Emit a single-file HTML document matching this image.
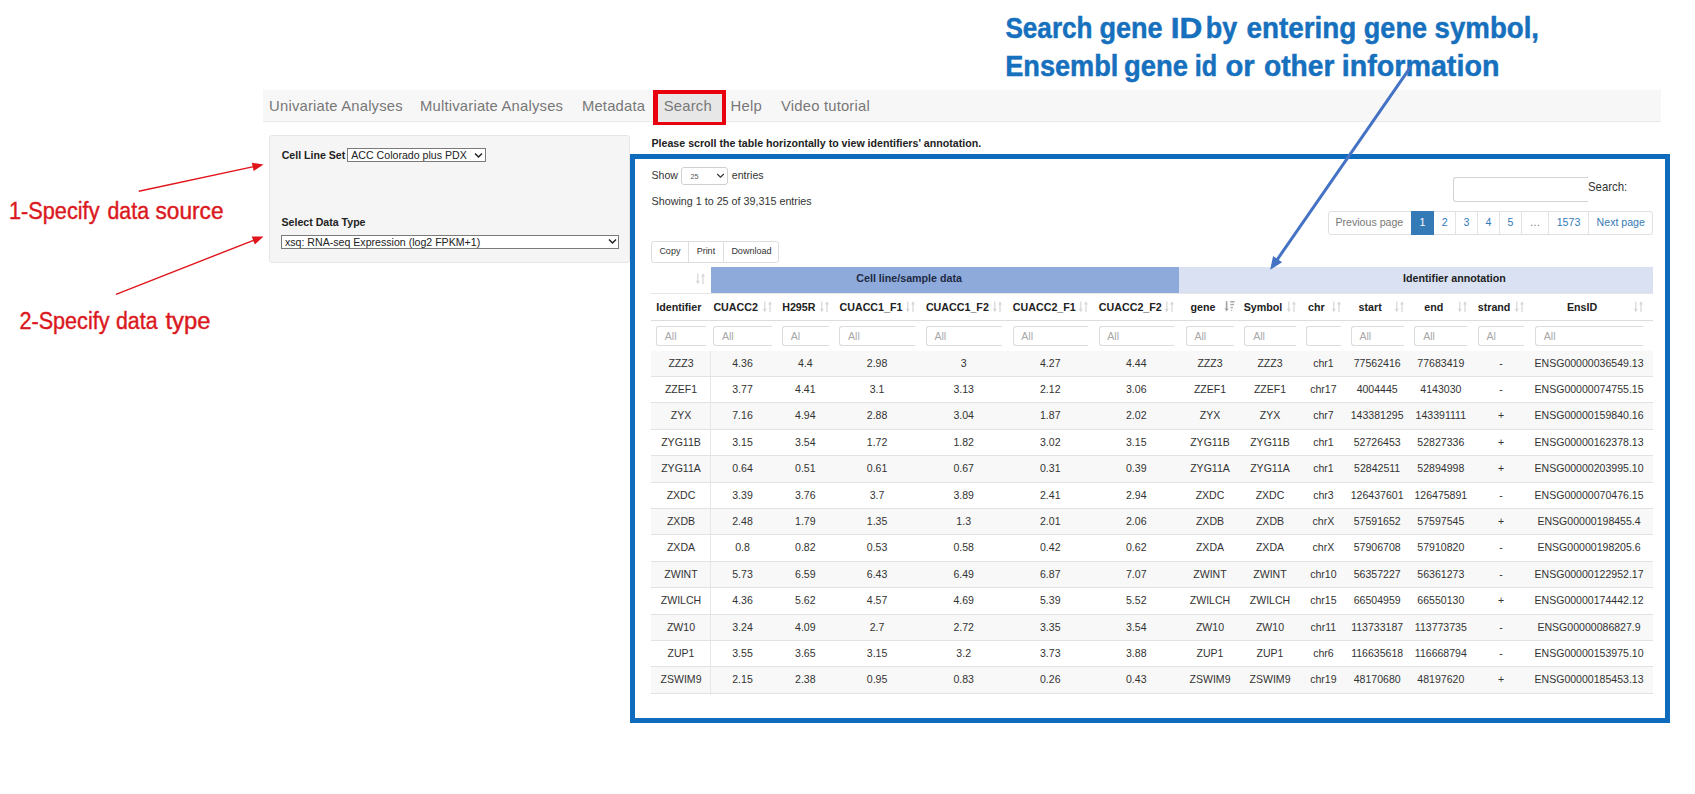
<!DOCTYPE html>
<html><head><meta charset="utf-8"><title>Search</title>
<style>
html,body{margin:0;padding:0;background:#fff;}
body{width:1695px;height:794px;position:relative;overflow:hidden;font-family:"Liberation Sans", sans-serif;}
.t{position:absolute;white-space:pre;font-family:"Liberation Sans", sans-serif;}
.b{position:absolute;}
</style></head><body>
<div class="b" style="left:263.00px;top:90.00px;width:1398.00px;height:32.00px;background:#f7f7f7;border-bottom:1.3px solid #e9e9e9;box-sizing:border-box;"></div>
<div class="b" style="left:653.00px;top:90.00px;width:73.00px;height:35.00px;background:#e7e7e7;"></div>
<div class="t" style="left:269.10px;top:98.77px;font-size:14.8px;line-height:14.8px;font-weight:400;color:#777;letter-spacing:0.2px;">Univariate Analyses</div>
<div class="t" style="left:420.00px;top:98.77px;font-size:14.8px;line-height:14.8px;font-weight:400;color:#777;letter-spacing:0.2px;">Multivariate Analyses</div>
<div class="t" style="left:581.90px;top:98.77px;font-size:14.8px;line-height:14.8px;font-weight:400;color:#777;letter-spacing:0.2px;">Metadata</div>
<div class="t" style="left:663.75px;top:98.77px;font-size:14.8px;line-height:14.8px;font-weight:400;color:#777;letter-spacing:0.2px;">Search</div>
<div class="t" style="left:730.60px;top:98.77px;font-size:14.8px;line-height:14.8px;font-weight:400;color:#777;letter-spacing:0.2px;">Help</div>
<div class="t" style="left:781.00px;top:98.77px;font-size:14.8px;line-height:14.8px;font-weight:400;color:#777;letter-spacing:0.2px;">Video tutorial</div>
<div class="b" style="left:653.00px;top:90.00px;width:73.00px;height:35.00px;border-style:solid;border-color:#e8000f;border-width:4.8px 4.6px 3.8px 5px;box-sizing:border-box;"></div>
<div class="b" style="left:269.00px;top:135.00px;width:361.00px;height:127.50px;background:#f5f5f5;border:1px solid #e6e6e6;box-sizing:border-box;border-radius:3px;"></div>
<div class="t" style="left:281.70px;top:150.13px;font-size:10.6px;line-height:10.6px;font-weight:700;color:#222;">Cell Line Set</div>
<div class="b" style="left:347.30px;top:148.00px;width:138.70px;height:14.00px;background:#fff;border:1px solid #7a7a7a;box-sizing:border-box;"></div>
<div class="t" style="left:351.30px;top:149.73px;font-size:10.6px;line-height:10.6px;font-weight:400;color:#222;">ACC Colorado plus PDX</div>
<svg class="b" style="left:474px;top:152px" width="9" height="7" viewBox="0 0 9 7"><path d="M1 1.5 L4.5 5 L8 1.5" fill="none" stroke="#222" stroke-width="1.5"/></svg>
<div class="t" style="left:281.50px;top:217.33px;font-size:10.6px;line-height:10.6px;font-weight:700;color:#222;">Select Data Type</div>
<div class="b" style="left:281.25px;top:235.30px;width:337.95px;height:13.50px;background:#fff;border:1px solid #7a7a7a;box-sizing:border-box;"></div>
<div class="t" style="left:285.00px;top:236.63px;font-size:10.6px;line-height:10.6px;font-weight:400;color:#222;">xsq: RNA-seq Expression (log2 FPKM+1)</div>
<svg class="b" style="left:608px;top:237.8px" width="9" height="7" viewBox="0 0 9 7"><path d="M1 1.5 L4.5 5 L8 1.5" fill="none" stroke="#222" stroke-width="1.5"/></svg>
<div class="t" style="left:651.50px;top:137.99px;font-size:10.64px;line-height:10.64px;font-weight:700;color:#222;">Please scroll the table horizontally to view identifiers' annotation.</div>
<div class="b" style="left:630.00px;top:154.00px;width:1040.00px;height:568.50px;border:5px solid #0f6cbd;box-sizing:border-box;"></div>
<div class="t" style="left:651.50px;top:170.13px;font-size:10.6px;line-height:10.6px;font-weight:400;color:#333;">Show</div>
<div class="b" style="left:681.30px;top:166.50px;width:46.70px;height:18.30px;border:1px solid #d0d0d0;border-radius:3px;box-sizing:border-box;background:#fff;"></div>
<div class="t" style="left:690.50px;top:172.91px;font-size:7.2px;line-height:7.2px;font-weight:400;color:#555;">25</div>
<svg class="b" style="left:716px;top:172px" width="9" height="7" viewBox="0 0 9 7"><path d="M1.2 2 L4.5 5.2 L7.8 2" fill="none" stroke="#333" stroke-width="1.1"/></svg>
<div class="t" style="left:731.80px;top:170.13px;font-size:10.6px;line-height:10.6px;font-weight:400;color:#333;">entries</div>
<div class="t" style="left:651.50px;top:196.10px;font-size:10.75px;line-height:10.75px;font-weight:400;color:#333;">Showing 1 to 25 of 39,315 entries</div>
<div class="b" style="left:1452.70px;top:176.50px;width:147.30px;height:25.30px;border:1.5px solid #d3d3d3;border-right:none;border-radius:3px 0 0 3px;box-sizing:border-box;background:#fff;"></div>
<div class="b" style="left:1587.50px;top:170.00px;width:52.50px;height:35.00px;background:#fff;"></div>
<div class="t" style="left:1588.20px;top:180.70px;font-size:12.4px;line-height:12.4px;font-weight:400;color:#333;transform:scaleX(0.92);transform-origin:0 0;">Search:</div>
<div class="b" style="left:1327.60px;top:211.40px;width:325.40px;height:23.80px;border:1px solid #e0e0e0;border-radius:3px;box-sizing:border-box;"></div>
<div class="b" style="left:1411.10px;top:211.40px;width:22.70px;height:23.80px;background:#337ab7;"></div>
<div class="t" style="left:1069.35px;width:600px;text-align:center;top:216.93px;font-size:10.6px;line-height:10.6px;font-weight:400;color:#777;">Previous page</div>
<div class="t" style="left:1122.45px;width:600px;text-align:center;top:216.93px;font-size:10.6px;line-height:10.6px;font-weight:400;color:#fff;">1</div>
<div class="t" style="left:1144.60px;width:600px;text-align:center;top:216.93px;font-size:10.6px;line-height:10.6px;font-weight:400;color:#337ab7;">2</div>
<div class="b" style="left:1454.90px;top:211.40px;width:1.00px;height:23.80px;background:#e3e3e3;"></div>
<div class="t" style="left:1166.45px;width:600px;text-align:center;top:216.93px;font-size:10.6px;line-height:10.6px;font-weight:400;color:#337ab7;">3</div>
<div class="b" style="left:1477.00px;top:211.40px;width:1.00px;height:23.80px;background:#e3e3e3;"></div>
<div class="t" style="left:1188.40px;width:600px;text-align:center;top:216.93px;font-size:10.6px;line-height:10.6px;font-weight:400;color:#337ab7;">4</div>
<div class="b" style="left:1498.80px;top:211.40px;width:1.00px;height:23.80px;background:#e3e3e3;"></div>
<div class="t" style="left:1210.40px;width:600px;text-align:center;top:216.93px;font-size:10.6px;line-height:10.6px;font-weight:400;color:#337ab7;">5</div>
<div class="b" style="left:1521.00px;top:211.40px;width:1.00px;height:23.80px;background:#e3e3e3;"></div>
<div class="t" style="left:1235.00px;width:600px;text-align:center;top:216.93px;font-size:10.6px;line-height:10.6px;font-weight:400;color:#777;">…</div>
<div class="b" style="left:1548.00px;top:211.40px;width:1.00px;height:23.80px;background:#e3e3e3;"></div>
<div class="t" style="left:1268.50px;width:600px;text-align:center;top:216.93px;font-size:10.6px;line-height:10.6px;font-weight:400;color:#337ab7;">1573</div>
<div class="b" style="left:1588.00px;top:211.40px;width:1.00px;height:23.80px;background:#e3e3e3;"></div>
<div class="t" style="left:1320.75px;width:600px;text-align:center;top:216.93px;font-size:10.6px;line-height:10.6px;font-weight:400;color:#337ab7;">Next page</div>
<div class="b" style="left:651.30px;top:241.30px;width:128.20px;height:21.40px;border:1px solid #dedede;border-radius:3px;box-sizing:border-box;background:#fff;"></div>
<div class="b" style="left:688.00px;top:241.30px;width:1.00px;height:21.40px;background:#dedede;"></div>
<div class="b" style="left:722.80px;top:241.30px;width:1.00px;height:21.40px;background:#dedede;"></div>
<div class="t" style="left:369.90px;width:600px;text-align:center;top:247.38px;font-size:9.0px;line-height:9.0px;font-weight:400;color:#333;">Copy</div>
<div class="t" style="left:405.90px;width:600px;text-align:center;top:247.38px;font-size:9.0px;line-height:9.0px;font-weight:400;color:#333;">Print</div>
<div class="t" style="left:451.40px;width:600px;text-align:center;top:247.38px;font-size:9.0px;line-height:9.0px;font-weight:400;color:#333;">Download</div>
<div class="b" style="left:710.90px;top:266.90px;width:468.50px;height:25.70px;background:#8eaadb;"></div>
<div class="b" style="left:1179.40px;top:266.90px;width:473.60px;height:25.70px;background:#d9e1f2;"></div>
<div class="b" style="left:651.00px;top:292.60px;width:1002.00px;height:1.40px;background:#e6e6e6;"></div>
<div class="t" style="left:856.25px;top:273.44px;font-size:10.7px;line-height:10.7px;font-weight:700;color:#1e2a44;">Cell line/sample data</div>
<div class="t" style="left:1403.10px;top:273.44px;font-size:10.7px;line-height:10.7px;font-weight:700;color:#222;">Identifier annotation</div>
<svg class="b" style="left:695.20px;top:273.30px" width="11" height="12" viewBox="0 0 11 12"><path d="M2.8 0.6 V9" stroke="#d6d6d6" stroke-width="1.2"/><path d="M0.8 7.8 L2.8 11.2 L4.8 7.8 Z" fill="#d6d6d6"/><path d="M8.0 2.6 V11.2" stroke="#d6d6d6" stroke-width="1.2"/><path d="M6.0 3.6 L8.0 0.3 L10.0 3.6 Z" fill="#d6d6d6"/></svg>
<div class="t" style="left:656.30px;top:301.54px;font-size:10.7px;line-height:10.7px;font-weight:700;color:#222;">Identifier</div>
<div class="t" style="left:713.40px;top:301.54px;font-size:10.7px;line-height:10.7px;font-weight:700;color:#222;">CUACC2</div>
<svg class="b" style="left:761.90px;top:301.20px" width="11" height="12" viewBox="0 0 11 12"><path d="M2.8 0.6 V9" stroke="#d6d6d6" stroke-width="1.2"/><path d="M0.8 7.8 L2.8 11.2 L4.8 7.8 Z" fill="#d6d6d6"/><path d="M8.0 2.6 V11.2" stroke="#d6d6d6" stroke-width="1.2"/><path d="M6.0 3.6 L8.0 0.3 L10.0 3.6 Z" fill="#d6d6d6"/></svg>
<div class="t" style="left:782.20px;top:301.54px;font-size:10.7px;line-height:10.7px;font-weight:700;color:#222;">H295R</div>
<svg class="b" style="left:818.75px;top:301.20px" width="11" height="12" viewBox="0 0 11 12"><path d="M2.8 0.6 V9" stroke="#d6d6d6" stroke-width="1.2"/><path d="M0.8 7.8 L2.8 11.2 L4.8 7.8 Z" fill="#d6d6d6"/><path d="M8.0 2.6 V11.2" stroke="#d6d6d6" stroke-width="1.2"/><path d="M6.0 3.6 L8.0 0.3 L10.0 3.6 Z" fill="#d6d6d6"/></svg>
<div class="t" style="left:839.50px;top:301.54px;font-size:10.7px;line-height:10.7px;font-weight:700;color:#222;">CUACC1_F1</div>
<svg class="b" style="left:905.00px;top:301.20px" width="11" height="12" viewBox="0 0 11 12"><path d="M2.8 0.6 V9" stroke="#d6d6d6" stroke-width="1.2"/><path d="M0.8 7.8 L2.8 11.2 L4.8 7.8 Z" fill="#d6d6d6"/><path d="M8.0 2.6 V11.2" stroke="#d6d6d6" stroke-width="1.2"/><path d="M6.0 3.6 L8.0 0.3 L10.0 3.6 Z" fill="#d6d6d6"/></svg>
<div class="t" style="left:925.90px;top:301.54px;font-size:10.7px;line-height:10.7px;font-weight:700;color:#222;">CUACC1_F2</div>
<svg class="b" style="left:991.80px;top:301.20px" width="11" height="12" viewBox="0 0 11 12"><path d="M2.8 0.6 V9" stroke="#d6d6d6" stroke-width="1.2"/><path d="M0.8 7.8 L2.8 11.2 L4.8 7.8 Z" fill="#d6d6d6"/><path d="M8.0 2.6 V11.2" stroke="#d6d6d6" stroke-width="1.2"/><path d="M6.0 3.6 L8.0 0.3 L10.0 3.6 Z" fill="#d6d6d6"/></svg>
<div class="t" style="left:1012.80px;top:301.54px;font-size:10.7px;line-height:10.7px;font-weight:700;color:#222;">CUACC2_F1</div>
<svg class="b" style="left:1078.00px;top:301.20px" width="11" height="12" viewBox="0 0 11 12"><path d="M2.8 0.6 V9" stroke="#d6d6d6" stroke-width="1.2"/><path d="M0.8 7.8 L2.8 11.2 L4.8 7.8 Z" fill="#d6d6d6"/><path d="M8.0 2.6 V11.2" stroke="#d6d6d6" stroke-width="1.2"/><path d="M6.0 3.6 L8.0 0.3 L10.0 3.6 Z" fill="#d6d6d6"/></svg>
<div class="t" style="left:1098.80px;top:301.54px;font-size:10.7px;line-height:10.7px;font-weight:700;color:#222;">CUACC2_F2</div>
<svg class="b" style="left:1164.00px;top:301.20px" width="11" height="12" viewBox="0 0 11 12"><path d="M2.8 0.6 V9" stroke="#d6d6d6" stroke-width="1.2"/><path d="M0.8 7.8 L2.8 11.2 L4.8 7.8 Z" fill="#d6d6d6"/><path d="M8.0 2.6 V11.2" stroke="#d6d6d6" stroke-width="1.2"/><path d="M6.0 3.6 L8.0 0.3 L10.0 3.6 Z" fill="#d6d6d6"/></svg>
<div class="t" style="left:903.00px;width:600px;text-align:center;top:301.54px;font-size:10.7px;line-height:10.7px;font-weight:700;color:#222;">gene</div>
<svg class="b" style="left:1223.90px;top:301.20px" width="12" height="12" viewBox="0 0 12 12"><path d="M2.6 0.3 V8.5" stroke="#a0a0a0" stroke-width="1.6"/><path d="M0.5 7.4 L2.6 10.6 L4.7 7.4 Z" fill="#a0a0a0"/><rect x="6.3" y="0" width="4.1" height="1.6" fill="#a8a8a8"/><rect x="6.3" y="2.9" width="3.7" height="1.4" fill="#a8a8a8"/><rect x="6.6" y="5.9" width="2.3" height="1.4" fill="#a8a8a8"/><rect x="7.0" y="8.8" width="1.2" height="1.0" fill="#a8a8a8"/></svg>
<div class="t" style="left:963.00px;width:600px;text-align:center;top:301.54px;font-size:10.7px;line-height:10.7px;font-weight:700;color:#222;">Symbol</div>
<svg class="b" style="left:1285.60px;top:301.20px" width="11" height="12" viewBox="0 0 11 12"><path d="M2.8 0.6 V9" stroke="#d6d6d6" stroke-width="1.2"/><path d="M0.8 7.8 L2.8 11.2 L4.8 7.8 Z" fill="#d6d6d6"/><path d="M8.0 2.6 V11.2" stroke="#d6d6d6" stroke-width="1.2"/><path d="M6.0 3.6 L8.0 0.3 L10.0 3.6 Z" fill="#d6d6d6"/></svg>
<div class="t" style="left:1016.42px;width:600px;text-align:center;top:301.54px;font-size:10.7px;line-height:10.7px;font-weight:700;color:#222;">chr</div>
<svg class="b" style="left:1330.60px;top:301.20px" width="11" height="12" viewBox="0 0 11 12"><path d="M2.8 0.6 V9" stroke="#d6d6d6" stroke-width="1.2"/><path d="M0.8 7.8 L2.8 11.2 L4.8 7.8 Z" fill="#d6d6d6"/><path d="M8.0 2.6 V11.2" stroke="#d6d6d6" stroke-width="1.2"/><path d="M6.0 3.6 L8.0 0.3 L10.0 3.6 Z" fill="#d6d6d6"/></svg>
<div class="t" style="left:1070.17px;width:600px;text-align:center;top:301.54px;font-size:10.7px;line-height:10.7px;font-weight:700;color:#222;">start</div>
<svg class="b" style="left:1393.75px;top:301.20px" width="11" height="12" viewBox="0 0 11 12"><path d="M2.8 0.6 V9" stroke="#d6d6d6" stroke-width="1.2"/><path d="M0.8 7.8 L2.8 11.2 L4.8 7.8 Z" fill="#d6d6d6"/><path d="M8.0 2.6 V11.2" stroke="#d6d6d6" stroke-width="1.2"/><path d="M6.0 3.6 L8.0 0.3 L10.0 3.6 Z" fill="#d6d6d6"/></svg>
<div class="t" style="left:1133.83px;width:600px;text-align:center;top:301.54px;font-size:10.7px;line-height:10.7px;font-weight:700;color:#222;">end</div>
<svg class="b" style="left:1457.25px;top:301.20px" width="11" height="12" viewBox="0 0 11 12"><path d="M2.8 0.6 V9" stroke="#d6d6d6" stroke-width="1.2"/><path d="M0.8 7.8 L2.8 11.2 L4.8 7.8 Z" fill="#d6d6d6"/><path d="M8.0 2.6 V11.2" stroke="#d6d6d6" stroke-width="1.2"/><path d="M6.0 3.6 L8.0 0.3 L10.0 3.6 Z" fill="#d6d6d6"/></svg>
<div class="t" style="left:1194.08px;width:600px;text-align:center;top:301.54px;font-size:10.7px;line-height:10.7px;font-weight:700;color:#222;">strand</div>
<svg class="b" style="left:1514.40px;top:301.20px" width="11" height="12" viewBox="0 0 11 12"><path d="M2.8 0.6 V9" stroke="#d6d6d6" stroke-width="1.2"/><path d="M0.8 7.8 L2.8 11.2 L4.8 7.8 Z" fill="#d6d6d6"/><path d="M8.0 2.6 V11.2" stroke="#d6d6d6" stroke-width="1.2"/><path d="M6.0 3.6 L8.0 0.3 L10.0 3.6 Z" fill="#d6d6d6"/></svg>
<div class="t" style="left:1282.05px;width:600px;text-align:center;top:301.54px;font-size:10.7px;line-height:10.7px;font-weight:700;color:#222;">EnsID</div>
<svg class="b" style="left:1633.10px;top:301.20px" width="11" height="12" viewBox="0 0 11 12"><path d="M2.8 0.6 V9" stroke="#d6d6d6" stroke-width="1.2"/><path d="M0.8 7.8 L2.8 11.2 L4.8 7.8 Z" fill="#d6d6d6"/><path d="M8.0 2.6 V11.2" stroke="#d6d6d6" stroke-width="1.2"/><path d="M6.0 3.6 L8.0 0.3 L10.0 3.6 Z" fill="#d6d6d6"/></svg>
<div class="b" style="left:651.00px;top:319.60px;width:1002.00px;height:1.30px;background:#dcdcdc;"></div>
<div class="b" style="left:656.00px;top:326.30px;width:50.00px;height:20.00px;border:1px solid #dcdcdc;border-right:none;border-radius:3px 0 0 3px;box-sizing:border-box;background:#fff;"></div>
<div class="t" style="left:664.80px;top:330.83px;font-size:10.6px;line-height:10.6px;font-weight:400;color:#a8a8a8;">All</div>
<div class="b" style="left:713.10px;top:326.30px;width:58.80px;height:20.00px;border:1px solid #dcdcdc;border-right:none;border-radius:3px 0 0 3px;box-sizing:border-box;background:#fff;"></div>
<div class="t" style="left:721.90px;top:330.83px;font-size:10.6px;line-height:10.6px;font-weight:400;color:#a8a8a8;">All</div>
<div class="b" style="left:781.90px;top:326.30px;width:46.85px;height:20.00px;border:1px solid #dcdcdc;border-right:none;border-radius:3px 0 0 3px;box-sizing:border-box;background:#fff;"></div>
<div class="t" style="left:790.70px;top:330.83px;font-size:10.6px;line-height:10.6px;font-weight:400;color:#a8a8a8;">Al</div>
<div class="b" style="left:839.20px;top:326.30px;width:75.80px;height:20.00px;border:1px solid #dcdcdc;border-right:none;border-radius:3px 0 0 3px;box-sizing:border-box;background:#fff;"></div>
<div class="t" style="left:848.00px;top:330.83px;font-size:10.6px;line-height:10.6px;font-weight:400;color:#a8a8a8;">All</div>
<div class="b" style="left:925.60px;top:326.30px;width:76.20px;height:20.00px;border:1px solid #dcdcdc;border-right:none;border-radius:3px 0 0 3px;box-sizing:border-box;background:#fff;"></div>
<div class="t" style="left:934.40px;top:330.83px;font-size:10.6px;line-height:10.6px;font-weight:400;color:#a8a8a8;">All</div>
<div class="b" style="left:1012.50px;top:326.30px;width:75.50px;height:20.00px;border:1px solid #dcdcdc;border-right:none;border-radius:3px 0 0 3px;box-sizing:border-box;background:#fff;"></div>
<div class="t" style="left:1021.30px;top:330.83px;font-size:10.6px;line-height:10.6px;font-weight:400;color:#a8a8a8;">All</div>
<div class="b" style="left:1098.50px;top:326.30px;width:75.50px;height:20.00px;border:1px solid #dcdcdc;border-right:none;border-radius:3px 0 0 3px;box-sizing:border-box;background:#fff;"></div>
<div class="t" style="left:1107.30px;top:330.83px;font-size:10.6px;line-height:10.6px;font-weight:400;color:#a8a8a8;">All</div>
<div class="b" style="left:1185.60px;top:326.30px;width:48.80px;height:20.00px;border:1px solid #dcdcdc;border-right:none;border-radius:3px 0 0 3px;box-sizing:border-box;background:#fff;"></div>
<div class="t" style="left:1194.40px;top:330.83px;font-size:10.6px;line-height:10.6px;font-weight:400;color:#a8a8a8;">All</div>
<div class="b" style="left:1244.40px;top:326.30px;width:51.20px;height:20.00px;border:1px solid #dcdcdc;border-right:none;border-radius:3px 0 0 3px;box-sizing:border-box;background:#fff;"></div>
<div class="t" style="left:1253.20px;top:330.83px;font-size:10.6px;line-height:10.6px;font-weight:400;color:#a8a8a8;">All</div>
<div class="b" style="left:1306.25px;top:326.30px;width:34.35px;height:20.00px;border:1px solid #dcdcdc;border-right:none;border-radius:3px 0 0 3px;box-sizing:border-box;background:#fff;"></div>
<div class="b" style="left:1350.60px;top:326.30px;width:53.15px;height:20.00px;border:1px solid #dcdcdc;border-right:none;border-radius:3px 0 0 3px;box-sizing:border-box;background:#fff;"></div>
<div class="t" style="left:1359.40px;top:330.83px;font-size:10.6px;line-height:10.6px;font-weight:400;color:#a8a8a8;">All</div>
<div class="b" style="left:1414.40px;top:326.30px;width:52.85px;height:20.00px;border:1px solid #dcdcdc;border-right:none;border-radius:3px 0 0 3px;box-sizing:border-box;background:#fff;"></div>
<div class="t" style="left:1423.20px;top:330.83px;font-size:10.6px;line-height:10.6px;font-weight:400;color:#a8a8a8;">All</div>
<div class="b" style="left:1477.75px;top:326.30px;width:46.65px;height:20.00px;border:1px solid #dcdcdc;border-right:none;border-radius:3px 0 0 3px;box-sizing:border-box;background:#fff;"></div>
<div class="t" style="left:1486.55px;top:330.83px;font-size:10.6px;line-height:10.6px;font-weight:400;color:#a8a8a8;">Al</div>
<div class="b" style="left:1535.00px;top:326.30px;width:108.10px;height:20.00px;border:1px solid #dcdcdc;border-right:none;border-radius:3px 0 0 3px;box-sizing:border-box;background:#fff;"></div>
<div class="t" style="left:1543.80px;top:330.83px;font-size:10.6px;line-height:10.6px;font-weight:400;color:#a8a8a8;">All</div>
<div class="b" style="left:651.00px;top:351.00px;width:1002.00px;height:25.00px;background:#f8f8f8;"></div>
<div class="b" style="left:651.00px;top:403.00px;width:1002.00px;height:26.00px;background:#f8f8f8;"></div>
<div class="b" style="left:651.00px;top:456.00px;width:1002.00px;height:26.00px;background:#f8f8f8;"></div>
<div class="b" style="left:651.00px;top:509.00px;width:1002.00px;height:25.00px;background:#f8f8f8;"></div>
<div class="b" style="left:651.00px;top:562.00px;width:1002.00px;height:25.00px;background:#f8f8f8;"></div>
<div class="b" style="left:651.00px;top:615.00px;width:1002.00px;height:25.00px;background:#f8f8f8;"></div>
<div class="b" style="left:651.00px;top:667.00px;width:1002.00px;height:26.00px;background:#f8f8f8;"></div>
<div class="b" style="left:651.00px;top:376.00px;width:1002.00px;height:1.00px;background:#e2e2e2;"></div>
<div class="b" style="left:651.00px;top:402.00px;width:1002.00px;height:1.00px;background:#e2e2e2;"></div>
<div class="b" style="left:651.00px;top:429.00px;width:1002.00px;height:1.00px;background:#e2e2e2;"></div>
<div class="b" style="left:651.00px;top:455.00px;width:1002.00px;height:1.00px;background:#e2e2e2;"></div>
<div class="b" style="left:651.00px;top:482.00px;width:1002.00px;height:1.00px;background:#e2e2e2;"></div>
<div class="b" style="left:651.00px;top:508.00px;width:1002.00px;height:1.00px;background:#e2e2e2;"></div>
<div class="b" style="left:651.00px;top:534.00px;width:1002.00px;height:1.00px;background:#e2e2e2;"></div>
<div class="b" style="left:651.00px;top:561.00px;width:1002.00px;height:1.00px;background:#e2e2e2;"></div>
<div class="b" style="left:651.00px;top:587.00px;width:1002.00px;height:1.00px;background:#e2e2e2;"></div>
<div class="b" style="left:651.00px;top:614.00px;width:1002.00px;height:1.00px;background:#e2e2e2;"></div>
<div class="b" style="left:651.00px;top:640.00px;width:1002.00px;height:1.00px;background:#e2e2e2;"></div>
<div class="b" style="left:651.00px;top:666.00px;width:1002.00px;height:1.00px;background:#e2e2e2;"></div>
<div class="b" style="left:651.00px;top:693.00px;width:1002.00px;height:1.00px;background:#e2e2e2;"></div>
<div class="t" style="left:381.00px;width:600px;text-align:center;top:357.67px;font-size:10.55px;line-height:10.55px;font-weight:400;color:#333;">ZZZ3</div>
<div class="t" style="left:442.50px;width:600px;text-align:center;top:357.67px;font-size:10.55px;line-height:10.55px;font-weight:400;color:#333;">4.36</div>
<div class="t" style="left:505.33px;width:600px;text-align:center;top:357.67px;font-size:10.55px;line-height:10.55px;font-weight:400;color:#333;">4.4</div>
<div class="t" style="left:577.10px;width:600px;text-align:center;top:357.67px;font-size:10.55px;line-height:10.55px;font-weight:400;color:#333;">2.98</div>
<div class="t" style="left:663.70px;width:600px;text-align:center;top:357.67px;font-size:10.55px;line-height:10.55px;font-weight:400;color:#333;">3</div>
<div class="t" style="left:750.25px;width:600px;text-align:center;top:357.67px;font-size:10.55px;line-height:10.55px;font-weight:400;color:#333;">4.27</div>
<div class="t" style="left:836.25px;width:600px;text-align:center;top:357.67px;font-size:10.55px;line-height:10.55px;font-weight:400;color:#333;">4.44</div>
<div class="t" style="left:910.00px;width:600px;text-align:center;top:357.67px;font-size:10.55px;line-height:10.55px;font-weight:400;color:#333;">ZZZ3</div>
<div class="t" style="left:970.00px;width:600px;text-align:center;top:357.67px;font-size:10.55px;line-height:10.55px;font-weight:400;color:#333;">ZZZ3</div>
<div class="t" style="left:1023.42px;width:600px;text-align:center;top:357.67px;font-size:10.55px;line-height:10.55px;font-weight:400;color:#333;">chr1</div>
<div class="t" style="left:1077.17px;width:600px;text-align:center;top:357.67px;font-size:10.55px;line-height:10.55px;font-weight:400;color:#333;">77562416</div>
<div class="t" style="left:1140.83px;width:600px;text-align:center;top:357.67px;font-size:10.55px;line-height:10.55px;font-weight:400;color:#333;">77683419</div>
<div class="t" style="left:1201.08px;width:600px;text-align:center;top:357.67px;font-size:10.55px;line-height:10.55px;font-weight:400;color:#333;">-</div>
<div class="t" style="left:1289.05px;width:600px;text-align:center;top:357.67px;font-size:10.55px;line-height:10.55px;font-weight:400;color:#333;">ENSG00000036549.13</div>
<div class="t" style="left:381.00px;width:600px;text-align:center;top:383.67px;font-size:10.55px;line-height:10.55px;font-weight:400;color:#333;">ZZEF1</div>
<div class="t" style="left:442.50px;width:600px;text-align:center;top:383.67px;font-size:10.55px;line-height:10.55px;font-weight:400;color:#333;">3.77</div>
<div class="t" style="left:505.33px;width:600px;text-align:center;top:383.67px;font-size:10.55px;line-height:10.55px;font-weight:400;color:#333;">4.41</div>
<div class="t" style="left:577.10px;width:600px;text-align:center;top:383.67px;font-size:10.55px;line-height:10.55px;font-weight:400;color:#333;">3.1</div>
<div class="t" style="left:663.70px;width:600px;text-align:center;top:383.67px;font-size:10.55px;line-height:10.55px;font-weight:400;color:#333;">3.13</div>
<div class="t" style="left:750.25px;width:600px;text-align:center;top:383.67px;font-size:10.55px;line-height:10.55px;font-weight:400;color:#333;">2.12</div>
<div class="t" style="left:836.25px;width:600px;text-align:center;top:383.67px;font-size:10.55px;line-height:10.55px;font-weight:400;color:#333;">3.06</div>
<div class="t" style="left:910.00px;width:600px;text-align:center;top:383.67px;font-size:10.55px;line-height:10.55px;font-weight:400;color:#333;">ZZEF1</div>
<div class="t" style="left:970.00px;width:600px;text-align:center;top:383.67px;font-size:10.55px;line-height:10.55px;font-weight:400;color:#333;">ZZEF1</div>
<div class="t" style="left:1023.42px;width:600px;text-align:center;top:383.67px;font-size:10.55px;line-height:10.55px;font-weight:400;color:#333;">chr17</div>
<div class="t" style="left:1077.17px;width:600px;text-align:center;top:383.67px;font-size:10.55px;line-height:10.55px;font-weight:400;color:#333;">4004445</div>
<div class="t" style="left:1140.83px;width:600px;text-align:center;top:383.67px;font-size:10.55px;line-height:10.55px;font-weight:400;color:#333;">4143030</div>
<div class="t" style="left:1201.08px;width:600px;text-align:center;top:383.67px;font-size:10.55px;line-height:10.55px;font-weight:400;color:#333;">-</div>
<div class="t" style="left:1289.05px;width:600px;text-align:center;top:383.67px;font-size:10.55px;line-height:10.55px;font-weight:400;color:#333;">ENSG00000074755.15</div>
<div class="t" style="left:381.00px;width:600px;text-align:center;top:409.67px;font-size:10.55px;line-height:10.55px;font-weight:400;color:#333;">ZYX</div>
<div class="t" style="left:442.50px;width:600px;text-align:center;top:409.67px;font-size:10.55px;line-height:10.55px;font-weight:400;color:#333;">7.16</div>
<div class="t" style="left:505.33px;width:600px;text-align:center;top:409.67px;font-size:10.55px;line-height:10.55px;font-weight:400;color:#333;">4.94</div>
<div class="t" style="left:577.10px;width:600px;text-align:center;top:409.67px;font-size:10.55px;line-height:10.55px;font-weight:400;color:#333;">2.88</div>
<div class="t" style="left:663.70px;width:600px;text-align:center;top:409.67px;font-size:10.55px;line-height:10.55px;font-weight:400;color:#333;">3.04</div>
<div class="t" style="left:750.25px;width:600px;text-align:center;top:409.67px;font-size:10.55px;line-height:10.55px;font-weight:400;color:#333;">1.87</div>
<div class="t" style="left:836.25px;width:600px;text-align:center;top:409.67px;font-size:10.55px;line-height:10.55px;font-weight:400;color:#333;">2.02</div>
<div class="t" style="left:910.00px;width:600px;text-align:center;top:409.67px;font-size:10.55px;line-height:10.55px;font-weight:400;color:#333;">ZYX</div>
<div class="t" style="left:970.00px;width:600px;text-align:center;top:409.67px;font-size:10.55px;line-height:10.55px;font-weight:400;color:#333;">ZYX</div>
<div class="t" style="left:1023.42px;width:600px;text-align:center;top:409.67px;font-size:10.55px;line-height:10.55px;font-weight:400;color:#333;">chr7</div>
<div class="t" style="left:1077.17px;width:600px;text-align:center;top:409.67px;font-size:10.55px;line-height:10.55px;font-weight:400;color:#333;">143381295</div>
<div class="t" style="left:1140.83px;width:600px;text-align:center;top:409.67px;font-size:10.55px;line-height:10.55px;font-weight:400;color:#333;">143391111</div>
<div class="t" style="left:1201.08px;width:600px;text-align:center;top:409.67px;font-size:10.55px;line-height:10.55px;font-weight:400;color:#333;">+</div>
<div class="t" style="left:1289.05px;width:600px;text-align:center;top:409.67px;font-size:10.55px;line-height:10.55px;font-weight:400;color:#333;">ENSG00000159840.16</div>
<div class="t" style="left:381.00px;width:600px;text-align:center;top:436.67px;font-size:10.55px;line-height:10.55px;font-weight:400;color:#333;">ZYG11B</div>
<div class="t" style="left:442.50px;width:600px;text-align:center;top:436.67px;font-size:10.55px;line-height:10.55px;font-weight:400;color:#333;">3.15</div>
<div class="t" style="left:505.33px;width:600px;text-align:center;top:436.67px;font-size:10.55px;line-height:10.55px;font-weight:400;color:#333;">3.54</div>
<div class="t" style="left:577.10px;width:600px;text-align:center;top:436.67px;font-size:10.55px;line-height:10.55px;font-weight:400;color:#333;">1.72</div>
<div class="t" style="left:663.70px;width:600px;text-align:center;top:436.67px;font-size:10.55px;line-height:10.55px;font-weight:400;color:#333;">1.82</div>
<div class="t" style="left:750.25px;width:600px;text-align:center;top:436.67px;font-size:10.55px;line-height:10.55px;font-weight:400;color:#333;">3.02</div>
<div class="t" style="left:836.25px;width:600px;text-align:center;top:436.67px;font-size:10.55px;line-height:10.55px;font-weight:400;color:#333;">3.15</div>
<div class="t" style="left:910.00px;width:600px;text-align:center;top:436.67px;font-size:10.55px;line-height:10.55px;font-weight:400;color:#333;">ZYG11B</div>
<div class="t" style="left:970.00px;width:600px;text-align:center;top:436.67px;font-size:10.55px;line-height:10.55px;font-weight:400;color:#333;">ZYG11B</div>
<div class="t" style="left:1023.42px;width:600px;text-align:center;top:436.67px;font-size:10.55px;line-height:10.55px;font-weight:400;color:#333;">chr1</div>
<div class="t" style="left:1077.17px;width:600px;text-align:center;top:436.67px;font-size:10.55px;line-height:10.55px;font-weight:400;color:#333;">52726453</div>
<div class="t" style="left:1140.83px;width:600px;text-align:center;top:436.67px;font-size:10.55px;line-height:10.55px;font-weight:400;color:#333;">52827336</div>
<div class="t" style="left:1201.08px;width:600px;text-align:center;top:436.67px;font-size:10.55px;line-height:10.55px;font-weight:400;color:#333;">+</div>
<div class="t" style="left:1289.05px;width:600px;text-align:center;top:436.67px;font-size:10.55px;line-height:10.55px;font-weight:400;color:#333;">ENSG00000162378.13</div>
<div class="t" style="left:381.00px;width:600px;text-align:center;top:462.67px;font-size:10.55px;line-height:10.55px;font-weight:400;color:#333;">ZYG11A</div>
<div class="t" style="left:442.50px;width:600px;text-align:center;top:462.67px;font-size:10.55px;line-height:10.55px;font-weight:400;color:#333;">0.64</div>
<div class="t" style="left:505.33px;width:600px;text-align:center;top:462.67px;font-size:10.55px;line-height:10.55px;font-weight:400;color:#333;">0.51</div>
<div class="t" style="left:577.10px;width:600px;text-align:center;top:462.67px;font-size:10.55px;line-height:10.55px;font-weight:400;color:#333;">0.61</div>
<div class="t" style="left:663.70px;width:600px;text-align:center;top:462.67px;font-size:10.55px;line-height:10.55px;font-weight:400;color:#333;">0.67</div>
<div class="t" style="left:750.25px;width:600px;text-align:center;top:462.67px;font-size:10.55px;line-height:10.55px;font-weight:400;color:#333;">0.31</div>
<div class="t" style="left:836.25px;width:600px;text-align:center;top:462.67px;font-size:10.55px;line-height:10.55px;font-weight:400;color:#333;">0.39</div>
<div class="t" style="left:910.00px;width:600px;text-align:center;top:462.67px;font-size:10.55px;line-height:10.55px;font-weight:400;color:#333;">ZYG11A</div>
<div class="t" style="left:970.00px;width:600px;text-align:center;top:462.67px;font-size:10.55px;line-height:10.55px;font-weight:400;color:#333;">ZYG11A</div>
<div class="t" style="left:1023.42px;width:600px;text-align:center;top:462.67px;font-size:10.55px;line-height:10.55px;font-weight:400;color:#333;">chr1</div>
<div class="t" style="left:1077.17px;width:600px;text-align:center;top:462.67px;font-size:10.55px;line-height:10.55px;font-weight:400;color:#333;">52842511</div>
<div class="t" style="left:1140.83px;width:600px;text-align:center;top:462.67px;font-size:10.55px;line-height:10.55px;font-weight:400;color:#333;">52894998</div>
<div class="t" style="left:1201.08px;width:600px;text-align:center;top:462.67px;font-size:10.55px;line-height:10.55px;font-weight:400;color:#333;">+</div>
<div class="t" style="left:1289.05px;width:600px;text-align:center;top:462.67px;font-size:10.55px;line-height:10.55px;font-weight:400;color:#333;">ENSG00000203995.10</div>
<div class="t" style="left:381.00px;width:600px;text-align:center;top:489.67px;font-size:10.55px;line-height:10.55px;font-weight:400;color:#333;">ZXDC</div>
<div class="t" style="left:442.50px;width:600px;text-align:center;top:489.67px;font-size:10.55px;line-height:10.55px;font-weight:400;color:#333;">3.39</div>
<div class="t" style="left:505.33px;width:600px;text-align:center;top:489.67px;font-size:10.55px;line-height:10.55px;font-weight:400;color:#333;">3.76</div>
<div class="t" style="left:577.10px;width:600px;text-align:center;top:489.67px;font-size:10.55px;line-height:10.55px;font-weight:400;color:#333;">3.7</div>
<div class="t" style="left:663.70px;width:600px;text-align:center;top:489.67px;font-size:10.55px;line-height:10.55px;font-weight:400;color:#333;">3.89</div>
<div class="t" style="left:750.25px;width:600px;text-align:center;top:489.67px;font-size:10.55px;line-height:10.55px;font-weight:400;color:#333;">2.41</div>
<div class="t" style="left:836.25px;width:600px;text-align:center;top:489.67px;font-size:10.55px;line-height:10.55px;font-weight:400;color:#333;">2.94</div>
<div class="t" style="left:910.00px;width:600px;text-align:center;top:489.67px;font-size:10.55px;line-height:10.55px;font-weight:400;color:#333;">ZXDC</div>
<div class="t" style="left:970.00px;width:600px;text-align:center;top:489.67px;font-size:10.55px;line-height:10.55px;font-weight:400;color:#333;">ZXDC</div>
<div class="t" style="left:1023.42px;width:600px;text-align:center;top:489.67px;font-size:10.55px;line-height:10.55px;font-weight:400;color:#333;">chr3</div>
<div class="t" style="left:1077.17px;width:600px;text-align:center;top:489.67px;font-size:10.55px;line-height:10.55px;font-weight:400;color:#333;">126437601</div>
<div class="t" style="left:1140.83px;width:600px;text-align:center;top:489.67px;font-size:10.55px;line-height:10.55px;font-weight:400;color:#333;">126475891</div>
<div class="t" style="left:1201.08px;width:600px;text-align:center;top:489.67px;font-size:10.55px;line-height:10.55px;font-weight:400;color:#333;">-</div>
<div class="t" style="left:1289.05px;width:600px;text-align:center;top:489.67px;font-size:10.55px;line-height:10.55px;font-weight:400;color:#333;">ENSG00000070476.15</div>
<div class="t" style="left:381.00px;width:600px;text-align:center;top:515.67px;font-size:10.55px;line-height:10.55px;font-weight:400;color:#333;">ZXDB</div>
<div class="t" style="left:442.50px;width:600px;text-align:center;top:515.67px;font-size:10.55px;line-height:10.55px;font-weight:400;color:#333;">2.48</div>
<div class="t" style="left:505.33px;width:600px;text-align:center;top:515.67px;font-size:10.55px;line-height:10.55px;font-weight:400;color:#333;">1.79</div>
<div class="t" style="left:577.10px;width:600px;text-align:center;top:515.67px;font-size:10.55px;line-height:10.55px;font-weight:400;color:#333;">1.35</div>
<div class="t" style="left:663.70px;width:600px;text-align:center;top:515.67px;font-size:10.55px;line-height:10.55px;font-weight:400;color:#333;">1.3</div>
<div class="t" style="left:750.25px;width:600px;text-align:center;top:515.67px;font-size:10.55px;line-height:10.55px;font-weight:400;color:#333;">2.01</div>
<div class="t" style="left:836.25px;width:600px;text-align:center;top:515.67px;font-size:10.55px;line-height:10.55px;font-weight:400;color:#333;">2.06</div>
<div class="t" style="left:910.00px;width:600px;text-align:center;top:515.67px;font-size:10.55px;line-height:10.55px;font-weight:400;color:#333;">ZXDB</div>
<div class="t" style="left:970.00px;width:600px;text-align:center;top:515.67px;font-size:10.55px;line-height:10.55px;font-weight:400;color:#333;">ZXDB</div>
<div class="t" style="left:1023.42px;width:600px;text-align:center;top:515.67px;font-size:10.55px;line-height:10.55px;font-weight:400;color:#333;">chrX</div>
<div class="t" style="left:1077.17px;width:600px;text-align:center;top:515.67px;font-size:10.55px;line-height:10.55px;font-weight:400;color:#333;">57591652</div>
<div class="t" style="left:1140.83px;width:600px;text-align:center;top:515.67px;font-size:10.55px;line-height:10.55px;font-weight:400;color:#333;">57597545</div>
<div class="t" style="left:1201.08px;width:600px;text-align:center;top:515.67px;font-size:10.55px;line-height:10.55px;font-weight:400;color:#333;">+</div>
<div class="t" style="left:1289.05px;width:600px;text-align:center;top:515.67px;font-size:10.55px;line-height:10.55px;font-weight:400;color:#333;">ENSG00000198455.4</div>
<div class="t" style="left:381.00px;width:600px;text-align:center;top:541.67px;font-size:10.55px;line-height:10.55px;font-weight:400;color:#333;">ZXDA</div>
<div class="t" style="left:442.50px;width:600px;text-align:center;top:541.67px;font-size:10.55px;line-height:10.55px;font-weight:400;color:#333;">0.8</div>
<div class="t" style="left:505.33px;width:600px;text-align:center;top:541.67px;font-size:10.55px;line-height:10.55px;font-weight:400;color:#333;">0.82</div>
<div class="t" style="left:577.10px;width:600px;text-align:center;top:541.67px;font-size:10.55px;line-height:10.55px;font-weight:400;color:#333;">0.53</div>
<div class="t" style="left:663.70px;width:600px;text-align:center;top:541.67px;font-size:10.55px;line-height:10.55px;font-weight:400;color:#333;">0.58</div>
<div class="t" style="left:750.25px;width:600px;text-align:center;top:541.67px;font-size:10.55px;line-height:10.55px;font-weight:400;color:#333;">0.42</div>
<div class="t" style="left:836.25px;width:600px;text-align:center;top:541.67px;font-size:10.55px;line-height:10.55px;font-weight:400;color:#333;">0.62</div>
<div class="t" style="left:910.00px;width:600px;text-align:center;top:541.67px;font-size:10.55px;line-height:10.55px;font-weight:400;color:#333;">ZXDA</div>
<div class="t" style="left:970.00px;width:600px;text-align:center;top:541.67px;font-size:10.55px;line-height:10.55px;font-weight:400;color:#333;">ZXDA</div>
<div class="t" style="left:1023.42px;width:600px;text-align:center;top:541.67px;font-size:10.55px;line-height:10.55px;font-weight:400;color:#333;">chrX</div>
<div class="t" style="left:1077.17px;width:600px;text-align:center;top:541.67px;font-size:10.55px;line-height:10.55px;font-weight:400;color:#333;">57906708</div>
<div class="t" style="left:1140.83px;width:600px;text-align:center;top:541.67px;font-size:10.55px;line-height:10.55px;font-weight:400;color:#333;">57910820</div>
<div class="t" style="left:1201.08px;width:600px;text-align:center;top:541.67px;font-size:10.55px;line-height:10.55px;font-weight:400;color:#333;">-</div>
<div class="t" style="left:1289.05px;width:600px;text-align:center;top:541.67px;font-size:10.55px;line-height:10.55px;font-weight:400;color:#333;">ENSG00000198205.6</div>
<div class="t" style="left:381.00px;width:600px;text-align:center;top:568.67px;font-size:10.55px;line-height:10.55px;font-weight:400;color:#333;">ZWINT</div>
<div class="t" style="left:442.50px;width:600px;text-align:center;top:568.67px;font-size:10.55px;line-height:10.55px;font-weight:400;color:#333;">5.73</div>
<div class="t" style="left:505.33px;width:600px;text-align:center;top:568.67px;font-size:10.55px;line-height:10.55px;font-weight:400;color:#333;">6.59</div>
<div class="t" style="left:577.10px;width:600px;text-align:center;top:568.67px;font-size:10.55px;line-height:10.55px;font-weight:400;color:#333;">6.43</div>
<div class="t" style="left:663.70px;width:600px;text-align:center;top:568.67px;font-size:10.55px;line-height:10.55px;font-weight:400;color:#333;">6.49</div>
<div class="t" style="left:750.25px;width:600px;text-align:center;top:568.67px;font-size:10.55px;line-height:10.55px;font-weight:400;color:#333;">6.87</div>
<div class="t" style="left:836.25px;width:600px;text-align:center;top:568.67px;font-size:10.55px;line-height:10.55px;font-weight:400;color:#333;">7.07</div>
<div class="t" style="left:910.00px;width:600px;text-align:center;top:568.67px;font-size:10.55px;line-height:10.55px;font-weight:400;color:#333;">ZWINT</div>
<div class="t" style="left:970.00px;width:600px;text-align:center;top:568.67px;font-size:10.55px;line-height:10.55px;font-weight:400;color:#333;">ZWINT</div>
<div class="t" style="left:1023.42px;width:600px;text-align:center;top:568.67px;font-size:10.55px;line-height:10.55px;font-weight:400;color:#333;">chr10</div>
<div class="t" style="left:1077.17px;width:600px;text-align:center;top:568.67px;font-size:10.55px;line-height:10.55px;font-weight:400;color:#333;">56357227</div>
<div class="t" style="left:1140.83px;width:600px;text-align:center;top:568.67px;font-size:10.55px;line-height:10.55px;font-weight:400;color:#333;">56361273</div>
<div class="t" style="left:1201.08px;width:600px;text-align:center;top:568.67px;font-size:10.55px;line-height:10.55px;font-weight:400;color:#333;">-</div>
<div class="t" style="left:1289.05px;width:600px;text-align:center;top:568.67px;font-size:10.55px;line-height:10.55px;font-weight:400;color:#333;">ENSG00000122952.17</div>
<div class="t" style="left:381.00px;width:600px;text-align:center;top:594.67px;font-size:10.55px;line-height:10.55px;font-weight:400;color:#333;">ZWILCH</div>
<div class="t" style="left:442.50px;width:600px;text-align:center;top:594.67px;font-size:10.55px;line-height:10.55px;font-weight:400;color:#333;">4.36</div>
<div class="t" style="left:505.33px;width:600px;text-align:center;top:594.67px;font-size:10.55px;line-height:10.55px;font-weight:400;color:#333;">5.62</div>
<div class="t" style="left:577.10px;width:600px;text-align:center;top:594.67px;font-size:10.55px;line-height:10.55px;font-weight:400;color:#333;">4.57</div>
<div class="t" style="left:663.70px;width:600px;text-align:center;top:594.67px;font-size:10.55px;line-height:10.55px;font-weight:400;color:#333;">4.69</div>
<div class="t" style="left:750.25px;width:600px;text-align:center;top:594.67px;font-size:10.55px;line-height:10.55px;font-weight:400;color:#333;">5.39</div>
<div class="t" style="left:836.25px;width:600px;text-align:center;top:594.67px;font-size:10.55px;line-height:10.55px;font-weight:400;color:#333;">5.52</div>
<div class="t" style="left:910.00px;width:600px;text-align:center;top:594.67px;font-size:10.55px;line-height:10.55px;font-weight:400;color:#333;">ZWILCH</div>
<div class="t" style="left:970.00px;width:600px;text-align:center;top:594.67px;font-size:10.55px;line-height:10.55px;font-weight:400;color:#333;">ZWILCH</div>
<div class="t" style="left:1023.42px;width:600px;text-align:center;top:594.67px;font-size:10.55px;line-height:10.55px;font-weight:400;color:#333;">chr15</div>
<div class="t" style="left:1077.17px;width:600px;text-align:center;top:594.67px;font-size:10.55px;line-height:10.55px;font-weight:400;color:#333;">66504959</div>
<div class="t" style="left:1140.83px;width:600px;text-align:center;top:594.67px;font-size:10.55px;line-height:10.55px;font-weight:400;color:#333;">66550130</div>
<div class="t" style="left:1201.08px;width:600px;text-align:center;top:594.67px;font-size:10.55px;line-height:10.55px;font-weight:400;color:#333;">+</div>
<div class="t" style="left:1289.05px;width:600px;text-align:center;top:594.67px;font-size:10.55px;line-height:10.55px;font-weight:400;color:#333;">ENSG00000174442.12</div>
<div class="t" style="left:381.00px;width:600px;text-align:center;top:621.67px;font-size:10.55px;line-height:10.55px;font-weight:400;color:#333;">ZW10</div>
<div class="t" style="left:442.50px;width:600px;text-align:center;top:621.67px;font-size:10.55px;line-height:10.55px;font-weight:400;color:#333;">3.24</div>
<div class="t" style="left:505.33px;width:600px;text-align:center;top:621.67px;font-size:10.55px;line-height:10.55px;font-weight:400;color:#333;">4.09</div>
<div class="t" style="left:577.10px;width:600px;text-align:center;top:621.67px;font-size:10.55px;line-height:10.55px;font-weight:400;color:#333;">2.7</div>
<div class="t" style="left:663.70px;width:600px;text-align:center;top:621.67px;font-size:10.55px;line-height:10.55px;font-weight:400;color:#333;">2.72</div>
<div class="t" style="left:750.25px;width:600px;text-align:center;top:621.67px;font-size:10.55px;line-height:10.55px;font-weight:400;color:#333;">3.35</div>
<div class="t" style="left:836.25px;width:600px;text-align:center;top:621.67px;font-size:10.55px;line-height:10.55px;font-weight:400;color:#333;">3.54</div>
<div class="t" style="left:910.00px;width:600px;text-align:center;top:621.67px;font-size:10.55px;line-height:10.55px;font-weight:400;color:#333;">ZW10</div>
<div class="t" style="left:970.00px;width:600px;text-align:center;top:621.67px;font-size:10.55px;line-height:10.55px;font-weight:400;color:#333;">ZW10</div>
<div class="t" style="left:1023.42px;width:600px;text-align:center;top:621.67px;font-size:10.55px;line-height:10.55px;font-weight:400;color:#333;">chr11</div>
<div class="t" style="left:1077.17px;width:600px;text-align:center;top:621.67px;font-size:10.55px;line-height:10.55px;font-weight:400;color:#333;">113733187</div>
<div class="t" style="left:1140.83px;width:600px;text-align:center;top:621.67px;font-size:10.55px;line-height:10.55px;font-weight:400;color:#333;">113773735</div>
<div class="t" style="left:1201.08px;width:600px;text-align:center;top:621.67px;font-size:10.55px;line-height:10.55px;font-weight:400;color:#333;">-</div>
<div class="t" style="left:1289.05px;width:600px;text-align:center;top:621.67px;font-size:10.55px;line-height:10.55px;font-weight:400;color:#333;">ENSG00000086827.9</div>
<div class="t" style="left:381.00px;width:600px;text-align:center;top:647.67px;font-size:10.55px;line-height:10.55px;font-weight:400;color:#333;">ZUP1</div>
<div class="t" style="left:442.50px;width:600px;text-align:center;top:647.67px;font-size:10.55px;line-height:10.55px;font-weight:400;color:#333;">3.55</div>
<div class="t" style="left:505.33px;width:600px;text-align:center;top:647.67px;font-size:10.55px;line-height:10.55px;font-weight:400;color:#333;">3.65</div>
<div class="t" style="left:577.10px;width:600px;text-align:center;top:647.67px;font-size:10.55px;line-height:10.55px;font-weight:400;color:#333;">3.15</div>
<div class="t" style="left:663.70px;width:600px;text-align:center;top:647.67px;font-size:10.55px;line-height:10.55px;font-weight:400;color:#333;">3.2</div>
<div class="t" style="left:750.25px;width:600px;text-align:center;top:647.67px;font-size:10.55px;line-height:10.55px;font-weight:400;color:#333;">3.73</div>
<div class="t" style="left:836.25px;width:600px;text-align:center;top:647.67px;font-size:10.55px;line-height:10.55px;font-weight:400;color:#333;">3.88</div>
<div class="t" style="left:910.00px;width:600px;text-align:center;top:647.67px;font-size:10.55px;line-height:10.55px;font-weight:400;color:#333;">ZUP1</div>
<div class="t" style="left:970.00px;width:600px;text-align:center;top:647.67px;font-size:10.55px;line-height:10.55px;font-weight:400;color:#333;">ZUP1</div>
<div class="t" style="left:1023.42px;width:600px;text-align:center;top:647.67px;font-size:10.55px;line-height:10.55px;font-weight:400;color:#333;">chr6</div>
<div class="t" style="left:1077.17px;width:600px;text-align:center;top:647.67px;font-size:10.55px;line-height:10.55px;font-weight:400;color:#333;">116635618</div>
<div class="t" style="left:1140.83px;width:600px;text-align:center;top:647.67px;font-size:10.55px;line-height:10.55px;font-weight:400;color:#333;">116668794</div>
<div class="t" style="left:1201.08px;width:600px;text-align:center;top:647.67px;font-size:10.55px;line-height:10.55px;font-weight:400;color:#333;">-</div>
<div class="t" style="left:1289.05px;width:600px;text-align:center;top:647.67px;font-size:10.55px;line-height:10.55px;font-weight:400;color:#333;">ENSG00000153975.10</div>
<div class="t" style="left:381.00px;width:600px;text-align:center;top:673.67px;font-size:10.55px;line-height:10.55px;font-weight:400;color:#333;">ZSWIM9</div>
<div class="t" style="left:442.50px;width:600px;text-align:center;top:673.67px;font-size:10.55px;line-height:10.55px;font-weight:400;color:#333;">2.15</div>
<div class="t" style="left:505.33px;width:600px;text-align:center;top:673.67px;font-size:10.55px;line-height:10.55px;font-weight:400;color:#333;">2.38</div>
<div class="t" style="left:577.10px;width:600px;text-align:center;top:673.67px;font-size:10.55px;line-height:10.55px;font-weight:400;color:#333;">0.95</div>
<div class="t" style="left:663.70px;width:600px;text-align:center;top:673.67px;font-size:10.55px;line-height:10.55px;font-weight:400;color:#333;">0.83</div>
<div class="t" style="left:750.25px;width:600px;text-align:center;top:673.67px;font-size:10.55px;line-height:10.55px;font-weight:400;color:#333;">0.26</div>
<div class="t" style="left:836.25px;width:600px;text-align:center;top:673.67px;font-size:10.55px;line-height:10.55px;font-weight:400;color:#333;">0.43</div>
<div class="t" style="left:910.00px;width:600px;text-align:center;top:673.67px;font-size:10.55px;line-height:10.55px;font-weight:400;color:#333;">ZSWIM9</div>
<div class="t" style="left:970.00px;width:600px;text-align:center;top:673.67px;font-size:10.55px;line-height:10.55px;font-weight:400;color:#333;">ZSWIM9</div>
<div class="t" style="left:1023.42px;width:600px;text-align:center;top:673.67px;font-size:10.55px;line-height:10.55px;font-weight:400;color:#333;">chr19</div>
<div class="t" style="left:1077.17px;width:600px;text-align:center;top:673.67px;font-size:10.55px;line-height:10.55px;font-weight:400;color:#333;">48170680</div>
<div class="t" style="left:1140.83px;width:600px;text-align:center;top:673.67px;font-size:10.55px;line-height:10.55px;font-weight:400;color:#333;">48197620</div>
<div class="t" style="left:1201.08px;width:600px;text-align:center;top:673.67px;font-size:10.55px;line-height:10.55px;font-weight:400;color:#333;">+</div>
<div class="t" style="left:1289.05px;width:600px;text-align:center;top:673.67px;font-size:10.55px;line-height:10.55px;font-weight:400;color:#333;">ENSG00000185453.13</div>
<div class="b" style="left:710.00px;top:351.00px;width:1.00px;height:344.00px;background:#e6e6e6;"></div>
<svg class="b" style="left:0;top:0" width="1695" height="794" viewBox="0 0 1695 794"><text x="1005.40" y="37.75" font-family="Liberation Sans" font-weight="700" font-size="30" fill="#1670bd" stroke="#1670bd" stroke-width="0.5" textLength="87.20" lengthAdjust="spacingAndGlyphs">Search</text><text x="1099.40" y="37.75" font-family="Liberation Sans" font-weight="700" font-size="30" fill="#1670bd" stroke="#1670bd" stroke-width="0.5" textLength="63.20" lengthAdjust="spacingAndGlyphs">gene</text><text x="1170.80" y="37.75" font-family="Liberation Sans" font-weight="700" font-size="30" fill="#1670bd" stroke="#1670bd" stroke-width="0.5" textLength="31.60" lengthAdjust="spacingAndGlyphs">ID</text><text x="1205.80" y="37.75" font-family="Liberation Sans" font-weight="700" font-size="30" fill="#1670bd" stroke="#1670bd" stroke-width="0.5" textLength="31.40" lengthAdjust="spacingAndGlyphs">by</text><text x="1246.40" y="37.75" font-family="Liberation Sans" font-weight="700" font-size="30" fill="#1670bd" stroke="#1670bd" stroke-width="0.5" textLength="110.00" lengthAdjust="spacingAndGlyphs">entering</text><text x="1363.80" y="37.75" font-family="Liberation Sans" font-weight="700" font-size="30" fill="#1670bd" stroke="#1670bd" stroke-width="0.5" textLength="63.20" lengthAdjust="spacingAndGlyphs">gene</text><text x="1434.60" y="37.75" font-family="Liberation Sans" font-weight="700" font-size="30" fill="#1670bd" stroke="#1670bd" stroke-width="0.5" textLength="104.40" lengthAdjust="spacingAndGlyphs">symbol,</text><text x="1005.20" y="75.6" font-family="Liberation Sans" font-weight="700" font-size="30" fill="#1670bd" stroke="#1670bd" stroke-width="0.5" textLength="113.20" lengthAdjust="spacingAndGlyphs">Ensembl</text><text x="1124.00" y="75.6" font-family="Liberation Sans" font-weight="700" font-size="30" fill="#1670bd" stroke="#1670bd" stroke-width="0.5" textLength="64.00" lengthAdjust="spacingAndGlyphs">gene</text><text x="1194.80" y="75.6" font-family="Liberation Sans" font-weight="700" font-size="30" fill="#1670bd" stroke="#1670bd" stroke-width="0.5" textLength="22.40" lengthAdjust="spacingAndGlyphs">id</text><text x="1225.40" y="75.6" font-family="Liberation Sans" font-weight="700" font-size="30" fill="#1670bd" stroke="#1670bd" stroke-width="0.5" textLength="29.20" lengthAdjust="spacingAndGlyphs">or</text><text x="1264.00" y="75.6" font-family="Liberation Sans" font-weight="700" font-size="30" fill="#1670bd" stroke="#1670bd" stroke-width="0.5" textLength="70.40" lengthAdjust="spacingAndGlyphs">other</text><text x="1341.80" y="75.6" font-family="Liberation Sans" font-weight="700" font-size="30" fill="#1670bd" stroke="#1670bd" stroke-width="0.5" textLength="157.60" lengthAdjust="spacingAndGlyphs">information</text><text x="9.00" y="218.9" font-family="Liberation Sans" font-weight="400" font-size="23" fill="#db1820" stroke="#db1820" stroke-width="0.4" textLength="90.50" lengthAdjust="spacingAndGlyphs">1-Specify</text><text x="107.50" y="218.9" font-family="Liberation Sans" font-weight="400" font-size="23" fill="#db1820" stroke="#db1820" stroke-width="0.4" textLength="41.50" lengthAdjust="spacingAndGlyphs">data</text><text x="155.50" y="218.9" font-family="Liberation Sans" font-weight="400" font-size="23" fill="#db1820" stroke="#db1820" stroke-width="0.4" textLength="68.00" lengthAdjust="spacingAndGlyphs">source</text><text x="19.50" y="328.6" font-family="Liberation Sans" font-weight="400" font-size="23" fill="#db1820" stroke="#db1820" stroke-width="0.4" textLength="90.00" lengthAdjust="spacingAndGlyphs">2-Specify</text><text x="116.00" y="328.6" font-family="Liberation Sans" font-weight="400" font-size="23" fill="#db1820" stroke="#db1820" stroke-width="0.4" textLength="41.50" lengthAdjust="spacingAndGlyphs">data</text><text x="165.50" y="328.6" font-family="Liberation Sans" font-weight="400" font-size="23" fill="#db1820" stroke="#db1820" stroke-width="0.4" textLength="45.00" lengthAdjust="spacingAndGlyphs">type</text><line x1="138.80" y1="191.20" x2="253.72" y2="166.69" stroke="#e1141c" stroke-width="1.4"/><polygon points="263.50,164.60 253.63,171.05 251.86,162.74" fill="#e1141c"/><line x1="116.00" y1="294.30" x2="254.19" y2="240.05" stroke="#e1141c" stroke-width="1.4"/><polygon points="263.50,236.40 254.81,244.38 251.71,236.46" fill="#e1141c"/><line x1="1411.00" y1="66.40" x2="1277.03" y2="259.83" stroke="#4472c4" stroke-width="3"/><polygon points="1270.20,269.70 1273.08,255.88 1282.12,262.14" fill="#4472c4"/></svg>
</body></html>
